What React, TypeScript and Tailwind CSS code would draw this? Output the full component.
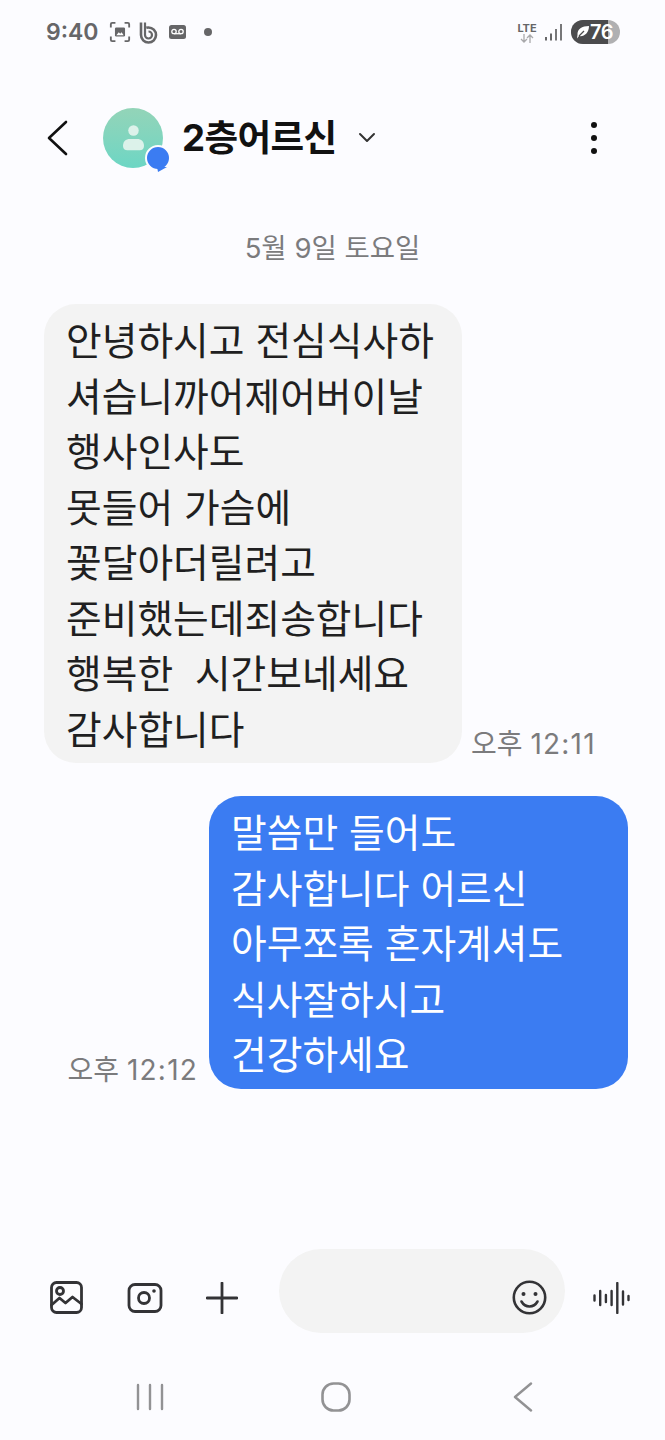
import React from "react";

const font = { fontFamily: 'Inter, "Noto Sans CJK KR", "Noto Sans", sans-serif' };

function Line({ children }: { children: React.ReactNode }) {
  return <div className="h-[55.5px] leading-[55.5px] whitespace-pre">{children}</div>;
}

function Time({ hm }: { hm: string }) {
  return (
    <span className="text-[28px] leading-[38px] text-[#7b7b7d] whitespace-pre">
      오후 <span className="tracking-[1.2px]">{hm}</span>
    </span>
  );
}

function StatusBar() {
  return (
    <div className="h-[64px] flex items-center pl-[46px] pr-[45px] text-[#666668]">
      <span className="text-[23px] font-semibold leading-none w-[54px]">9:40</span>
      <svg className="ml-[9px]" width="22" height="22" viewBox="0 0 24 24" fill="none" stroke="#666668" strokeWidth="2">
        <path d="M2 7V3.500A1.500 1.500 0 0 1 3.500 2H7M17 2h3.500A1.500 1.500 0 0 1 22 3.500V7M22 17v3.500a1.500 1.500 0 0 1-1.500 1.500H17M7 22H3.500A1.500 1.500 0 0 1 2 20.500V17" />
        <rect x="6.500" y="7" width="11" height="10" rx="1.500" fill="#666668" stroke="none" />
        <path d="M8 15.500l2.700-3.200 1.500 1.500 1.500-1.500 2.300 3.200z" fill="#fff" stroke="none" />
      </svg>
      <svg className="ml-[8px]" width="19" height="23" viewBox="0 0 19 23" fill="none" stroke="#666668">
        <path d="M2 1.500v12.500a7.500 7.500 0 1 0 7.500-7.500c-.8 0-1.500.1-2.200.3" strokeWidth="2.600" />
        <path d="M6 1.500v12.500a3.500 3.500 0 1 0 3.500-3.500" strokeWidth="2.200" />
      </svg>
      <svg className="ml-[11px]" width="17" height="14" viewBox="0 0 17 14">
        <rect width="17" height="14" rx="2.500" fill="#666668" />
        <circle cx="5" cy="6.500" r="2.200" fill="none" stroke="#fff" strokeWidth="1.300" />
        <circle cx="12" cy="6.500" r="2.200" fill="none" stroke="#fff" strokeWidth="1.300" />
        <path d="M5 8.700h7" stroke="#fff" strokeWidth="1.300" />
      </svg>
      <span className="ml-[18px] w-[8px] h-[8px] rounded-full bg-[#666668]" />
      <div className="ml-auto flex items-center">
        <div className="flex flex-col items-center w-[20px] text-[#666668]">
          <span className="text-[11px] font-bold leading-[12px]">LTE</span>
          <svg width="14" height="9" viewBox="0 0 14 9" fill="none" stroke="#a9a9ab" strokeWidth="1.300">
            <path d="M4 0v8M1 5l3 3 3-3M10 9V1M7 4l3-3 3 3" />
          </svg>
        </div>
        <svg className="ml-[8px]" width="17" height="18" viewBox="0 0 17 18">
          <rect x="0" y="14" width="2" height="3.500" fill="#666668" />
          <rect x="5" y="10.500" width="2" height="7" fill="#666668" />
          <rect x="10" y="6" width="2" height="11.500" fill="#777779" />
          <rect x="15" y="1" width="2" height="16.500" fill="#777779" />
        </svg>
        <div className="ml-[9px] relative w-[49px] h-[24px] rounded-full overflow-hidden bg-[#b0b0b2] flex items-center">
          <div className="absolute left-0 top-0 bottom-0 w-[37px] bg-[#4b4b4d]" />
          <svg className="relative ml-[5px]" width="14" height="14" viewBox="0 0 14 14">
            <path d="M13 1C6 1 1 4 1.500 10 L1 13.500 3 11C8 12 13 8 13 1z" fill="#fff" />
            <path d="M3 11l5-5" stroke="#4b4b4d" strokeWidth="1.200" />
          </svg>
          <span className="relative text-white text-[20px] font-semibold leading-none tracking-[-0.5px]">76</span>
        </div>
      </div>
    </div>
  );
}

function Header() {
  return (
    <div className="mt-[29px] h-[90px] flex items-center pl-[46px] pr-[68px]">
      <svg width="24" height="36" viewBox="0 0 24 36" fill="none" stroke="#111" strokeWidth="2.600" strokeLinecap="round" strokeLinejoin="round">
        <path d="M20 2 3 18l17 16" />
      </svg>
      <div className="relative ml-[33px] w-[60px] h-[60px] rounded-full bg-gradient-to-b from-[#93d4b8] to-[#6cd6c4] flex items-center justify-center">
        <svg width="21" height="28" viewBox="0 0 24 32" fill="#dcf2ea">
          <circle cx="12" cy="7.500" r="6" />
          <path d="M0 25c0-5 3-8 8-8h8c5 0 8 3 8 8 0 3-2 5-5 5H5c-3 0-5-2-5-5z" />
        </svg>
        <div className="absolute left-[42px] top-[37px] w-[22px] h-[22px] rounded-full bg-[#3b7cf2] border-[2px] border-[#fcfcff] box-content" />
        <svg className="absolute left-[54px] top-[59px]" width="10" height="5" viewBox="0 0 10 5"><path d="M0 0h10L1 5z" fill="#3b7cf2" /></svg>
      </div>
      <span className="ml-[19px] text-[36.6px] font-bold text-[#111] leading-none tracking-[-0.6px]">2층어르신</span>
      <svg className="ml-[20px]" width="20" height="12" viewBox="0 0 20 12" fill="none" stroke="#333" strokeWidth="2" strokeLinecap="round" strokeLinejoin="round">
        <path d="M3 2l7 7 7-7" />
      </svg>
      <div className="ml-auto flex flex-col gap-[7px]">
        <span className="w-[6px] h-[6px] rounded-full bg-[#111]" />
        <span className="w-[6px] h-[6px] rounded-full bg-[#111]" />
        <span className="w-[6px] h-[6px] rounded-full bg-[#111]" />
      </div>
    </div>
  );
}

function Composer() {
  return (
    <div className="mt-[160px] h-[84px] flex items-center pl-[49px] pr-[35px]">
      <svg className="mt-[14px]" width="35" height="35" viewBox="0 0 35 35" fill="none" stroke="#333336" strokeWidth="2.800" strokeLinejoin="round" strokeLinecap="round">
        <rect x="2.500" y="2.500" width="30" height="30" rx="5" />
        <circle cx="11" cy="11" r="3.500" />
        <path d="M2.500 25l8-7 6 5 7-6 9 7" />
      </svg>
      <svg className="ml-[43px] mt-[14px]" width="36" height="30" viewBox="0 0 36 30" fill="none" stroke="#333336" strokeWidth="2.800">
        <rect x="2" y="1.500" width="32" height="27" rx="6" />
        <circle cx="17" cy="15" r="5.500" />
        <circle cx="27" cy="8" r="1.800" fill="#333336" stroke="none" />
      </svg>
      <svg className="ml-[43px] mt-[14px]" width="32" height="32" viewBox="0 0 32 32" stroke="#333336" strokeWidth="2.800" strokeLinecap="round">
        <path d="M16 1v30M1 16h30" />
      </svg>
      <div className="ml-[41px] w-[286px] h-[84px] rounded-full bg-[#f3f3f3] flex items-center justify-end pr-[18px] pt-[14px]">
        <svg width="35" height="35" viewBox="0 0 35 35" fill="none" stroke="#333336" strokeWidth="2.600" strokeLinecap="round">
          <circle cx="17.500" cy="17.500" r="15.700" />
          <circle cx="11.500" cy="14" r="2" fill="#333336" stroke="none" />
          <circle cx="23.500" cy="14" r="2" fill="#333336" stroke="none" />
          <path d="M9.500 21.500c2 3.500 5 5 8 5s6-1.500 8-5" />
        </svg>
      </div>
      <svg className="ml-auto mt-[14px]" width="37" height="32" viewBox="0 0 37 32" stroke="#333336" strokeWidth="2.400" strokeLinecap="round">
        <path d="M1.500 13.500v5M7.200 9v14M12.900 13v7M18.600 9v14M24.300 1v30M30 9.500v13M35.500 14v4" />
      </svg>
    </div>
  );
}

function NavBar() {
  return (
    <div className="mt-[48px] h-[32px] flex items-center pl-[136px] pr-[132px] justify-between">
      <svg width="28" height="28" viewBox="0 0 28 28" stroke="#929294" strokeWidth="2.400" strokeLinecap="round">
        <path d="M2 2v24M14 2v24M26 2v24" />
      </svg>
      <svg className="mr-[6px]" width="30" height="30" viewBox="0 0 30 30" fill="none" stroke="#929294" strokeWidth="2.600">
        <rect x="1.500" y="1.500" width="27" height="27" rx="11" />
      </svg>
      <svg width="20" height="30" viewBox="0 0 20 30" fill="none" stroke="#929294" strokeWidth="2.400" strokeLinecap="round" strokeLinejoin="round">
        <path d="M18 1.500 2 15l16 13.500" />
      </svg>
    </div>
  );
}

export default function App() {
  return (
    <div className="w-[665px] h-[1440px] overflow-hidden bg-[#fcfcff] flex flex-col" style={font}>
      <StatusBar />
      <Header />
      <div className="mt-[47px] text-center text-[27.5px] leading-[36px] text-[#7b7b7d]">5월 9일 토요일</div>
      <div className="mt-[38px] flex items-end pl-[44px]">
        <div className="w-[418px] rounded-[32px] bg-[#f3f3f3] pl-[22px] pt-[9px] pb-[6px] text-[38.8px] text-[#1f1f21]">
          <Line>안녕하시고 전심식사하</Line>
          <Line>셔습니까어제어버이날</Line>
          <Line>행사인사도</Line>
          <Line>못들어 가슴에</Line>
          <Line>꽃달아더릴려고</Line>
          <Line>준비했는데죄송합니다</Line>
          <Line>행복한  시간보네세요</Line>
          <Line>감사합니다</Line>
        </div>
        <span className="ml-[9px] flex"><Time hm="12:11" /></span>
      </div>
      <div className="mt-[33px] flex items-end justify-end pr-[37px]">
        <span className="mr-[11px] flex"><Time hm="12:12" /></span>
        <div className="w-[419px] rounded-[32px] bg-[#3b7cf2] pl-[22px] pt-[9px] pb-[6px] text-[38.8px] text-white">
          <Line>말씀만 들어도</Line>
          <Line>감사합니다 어르신</Line>
          <Line>아무쪼록 혼자계셔도</Line>
          <Line>식사잘하시고</Line>
          <Line>건강하세요</Line>
        </div>
      </div>
      <Composer />
      <NavBar />
    </div>
  );
}
